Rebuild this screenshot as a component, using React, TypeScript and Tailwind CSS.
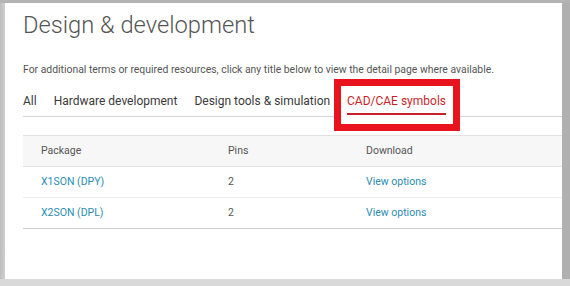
import React from "react";

const tabs = ["All", "Hardware development", "Design tools & simulation"];

const rows = [
  { pkg: "X1SON (DPY)", pins: "2" },
  { pkg: "X2SON (DPL)", pins: "2" },
];

export default function App() {
  return (
    <div
      className="flex h-[286px] w-[570px] flex-col bg-[#b4b4b4] pt-[3px]"
      style={{ fontFamily: "Roboto, 'Liberation Sans', sans-serif" }}
    >
      <div className="flex flex-1">
        <div className="w-[5px] bg-gradient-to-r from-[#bdbdbd] to-[#cfcfcf]" />
        <div className="relative flex-1 bg-white pl-[18px]">
          <h1 className="mt-[8px] text-[23.7px] font-light leading-[28px] text-[#555]">
            Design &amp; development
          </h1>
          <p className="mt-[23px] whitespace-nowrap text-[10.4px] leading-[16px] text-[#555]">
            For additional terms or required resources, click any title below to view the detail page where available.
          </p>

          <div className="mt-[9px] flex h-[30px] items-start gap-[17px] border-b border-[#d6d6d6] pt-[5px] text-[12px] leading-[18px] text-[#3a3a3a]">
            {tabs.map((t) => (
              <span key={t}>{t}</span>
            ))}
            <span className="invisible">CAD/CAE symbols</span>
          </div>

          {/* highlighted tab annotation */}
          <div className="absolute left-[329px] top-[76px] flex h-[52px] w-[126px] border-[7px] border-[#e8131c] bg-white px-[6px] pt-[6px]">
            <div className="h-[23px] whitespace-nowrap border-b-2 border-[#c8202a] text-[12px] leading-[18px] text-[#cc1f2a]">
              CAD/CAE symbols
            </div>
          </div>

          <div className="mt-[18px] text-[10.5px] text-[#555]">
            <div className="grid h-[32px] grid-cols-[187px_138px_1fr] items-center border-y border-[#e2e2e2] bg-[#f7f7f7]">
              <span className="pl-[18px]">Package</span>
              <span className="pl-[18px]">Pins</span>
              <span className="pl-[18px]">Download</span>
            </div>
            {rows.map((r, i) => (
              <div
                key={r.pkg}
                className={
                  "grid h-[31px] grid-cols-[187px_138px_1fr] items-center border-b " +
                  (i === rows.length - 1 ? "border-[#cfcfcf]" : "border-[#eeeeee]")
                }
              >
                <span className="pl-[18px] text-[#2b8db2]">{r.pkg}</span>
                <span className="pl-[18px]">{r.pins}</span>
                <span className="pl-[18px] text-[#2b8db2]">View options</span>
              </div>
            ))}
          </div>
        </div>
        <div className="w-[8px] bg-[#b0b0b0]" />
      </div>
      <div className="h-[7px] bg-[#d9d9d9]" />
    </div>
  );
}
